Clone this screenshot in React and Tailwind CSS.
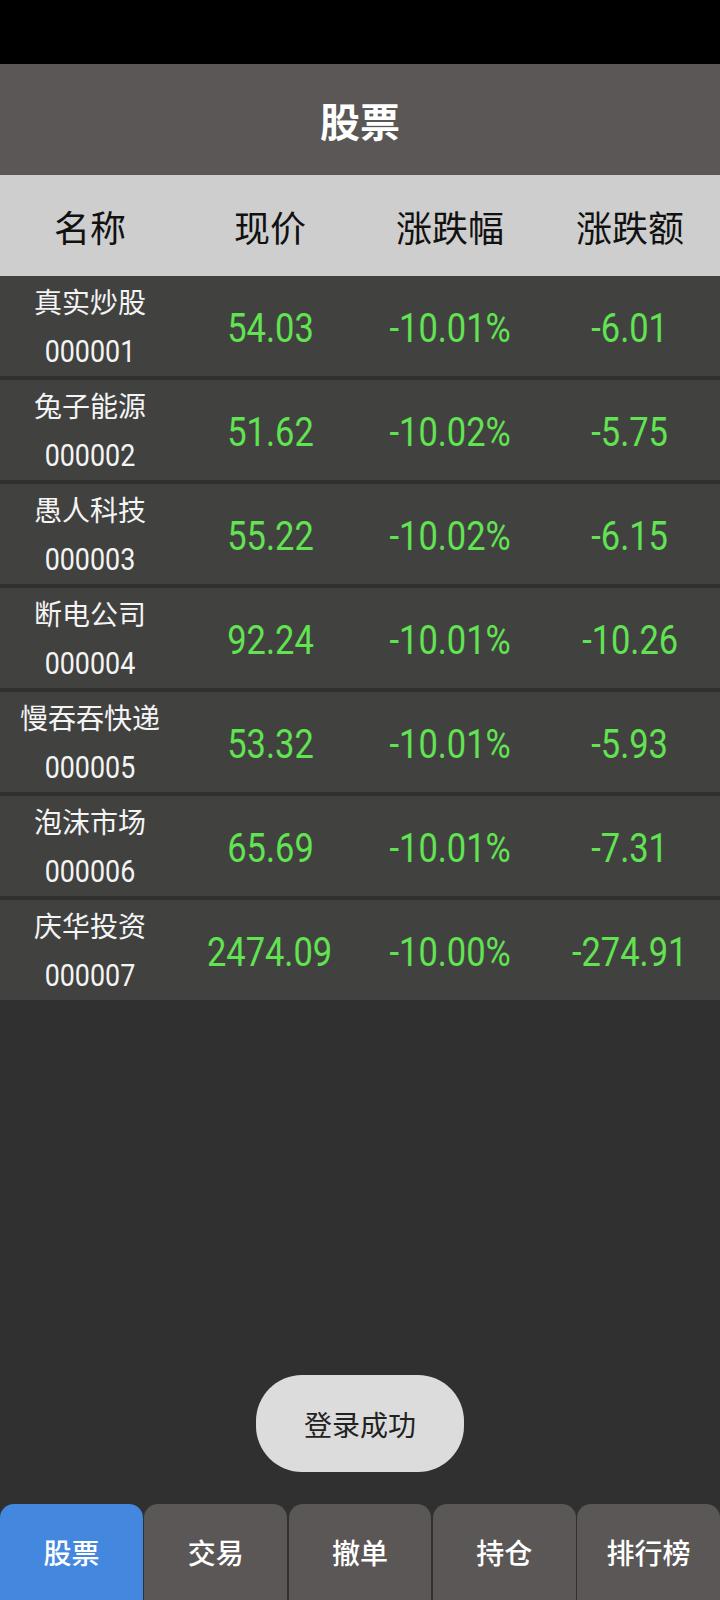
import React from 'react';

const stocks = [
  { name: '真实炒股', code: '000001', price: '54.03', pct: '-10.01%', amt: '-6.01' },
  { name: '兔子能源', code: '000002', price: '51.62', pct: '-10.02%', amt: '-5.75' },
  { name: '愚人科技', code: '000003', price: '55.22', pct: '-10.02%', amt: '-6.15' },
  { name: '断电公司', code: '000004', price: '92.24', pct: '-10.01%', amt: '-10.26' },
  { name: '慢吞吞快递', code: '000005', price: '53.32', pct: '-10.01%', amt: '-5.93' },
  { name: '泡沫市场', code: '000006', price: '65.69', pct: '-10.01%', amt: '-7.31' },
  { name: '庆华投资', code: '000007', price: '2474.09', pct: '-10.00%', amt: '-274.91' },
];

const tabs = ['股票', '交易', '撤单', '持仓', '排行榜'];

const cjk = 'font-["Noto_Sans_CJK_SC","Noto_Sans",sans-serif]';
// narrow digits: Roboto squeezed horizontally
const num = 'inline-block scale-x-[0.84] font-["Roboto","Noto_Sans_CJK_SC",sans-serif]';

const Cell = ({ children }) => (
  <div className="pt-[6px]">
    <span className={`text-[41px] text-[#62e352] ${num}`}>{children}</span>
  </div>
);

export default function App() {
  return (
    <div className={`relative flex min-h-[1600px] w-[720px] flex-col bg-[#303030] ${cjk}`}>
      {/* status bar */}
      <div className="h-16 bg-black" />

      {/* title */}
      <div className="flex h-[111px] items-center justify-center bg-[#5a5756]">
        <span className="text-[40px] font-bold text-white">股票</span>
      </div>

      {/* table header */}
      <div className="grid h-[101px] grid-cols-4 items-center bg-[#cecece] text-center text-[36px] text-[#111]">
        <span>名称</span>
        <span>现价</span>
        <span>涨跌幅</span>
        <span>涨跌额</span>
      </div>

      {/* rows */}
      <div className="flex flex-col gap-1">
        {stocks.map((s) => (
          <div key={s.code} className="grid h-[100px] grid-cols-4 items-center bg-[#414240] text-center">
            <div className="flex flex-col items-center text-[#f4f4f4]">
              <span className="text-[28px] leading-[50px]">{s.name}</span>
              <span className={`text-[32px] leading-[50px] ${num}`}>{s.code}</span>
            </div>
            <Cell>{s.price}</Cell>
            <Cell>{s.pct}</Cell>
            <Cell>{s.amt}</Cell>
          </div>
        ))}
      </div>

      <div className="flex-1" />

      {/* toast */}
      <div className="absolute left-[256px] top-[1375px] flex h-[97px] w-[208px] items-center justify-center rounded-[46px] bg-[#dcdcdc]">
        <span className="text-[28px] text-[#222]">登录成功</span>
      </div>

      {/* bottom tabs */}
      <div className="grid h-24 grid-cols-5 gap-[1.5px]">
        {tabs.map((t, i) => (
          <div
            key={t}
            className={`flex items-center justify-center rounded-t-[14px] text-[28px] font-medium text-white ${
              i === 0 ? 'bg-[#4487df]' : 'bg-[#5a5756]'
            }`}
          >
            {t}
          </div>
        ))}
      </div>
    </div>
  );
}
